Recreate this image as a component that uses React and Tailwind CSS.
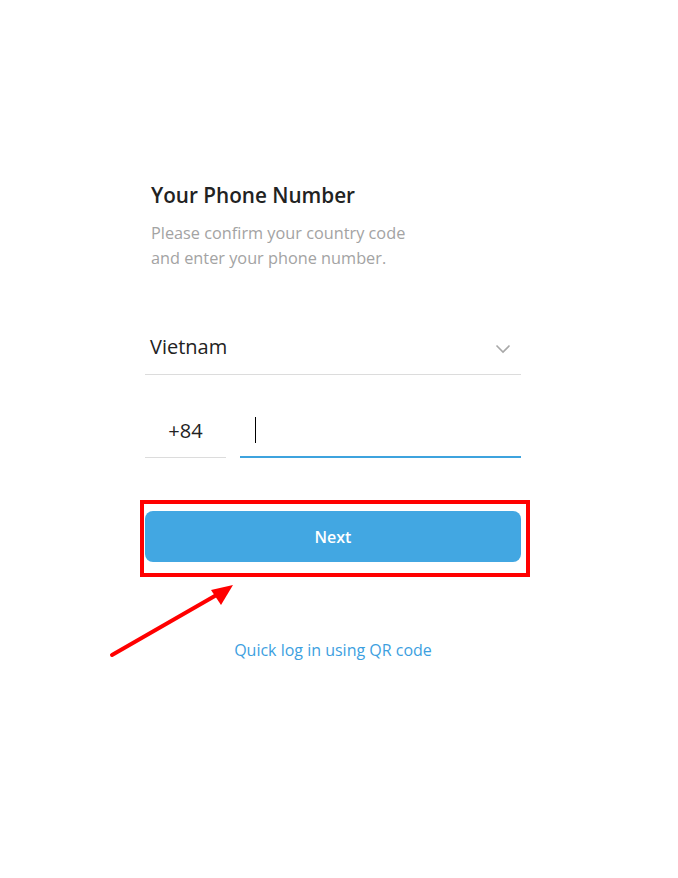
import { useState } from 'react'

export default function App() {
  const [phone, setPhone] = useState('')

  return (
    <div className="relative w-[678px] h-[878px] bg-white font-['Open_Sans',sans-serif]">
      <div className="ml-[145px] w-[376px] pt-[181px]">
        {/* Heading */}
        <h1 className="pl-[6px] text-[20.7px] leading-[28px] font-semibold text-[#222222]">Your Phone Number</h1>
        <p className="mt-[12px] pl-[6px] text-[16.3px] leading-[25px] text-[#a3a3a3]">
          Please confirm your country code
          <br />
          and enter your phone number.
        </p>

        {/* Country select */}
        <div className="mt-[49px] h-[55px] flex items-center border-b border-[#dcdcdc] pl-[5px] pr-[10px]">
          <span className="text-[20px] text-[#222222]">Vietnam</span>
          <svg className="ml-auto mt-[4px]" width="16" height="10" viewBox="0 0 16 10" fill="none">
            <path d="M1.5 1.5L8 8L14.5 1.5" stroke="#a8a8a8" strokeWidth="1.6" />
          </svg>
        </div>

        {/* Phone row */}
        <div className="mt-[29px] flex h-[54px]">
          <div className="w-[81px] flex items-center justify-center border-b border-[#dcdcdc] text-[20px] text-[#222222]">+84</div>
          <div className="ml-[14px] flex-1 flex items-center border-b-2 border-[#3ea3de] pl-[15px]">
            <span className="w-px h-[26px] bg-black" />
            <input
              value={phone}
              onChange={(e) => setPhone(e.target.value)}
              className="flex-1 outline-none text-[20px] bg-transparent"
            />
          </div>
        </div>

        {/* Next button with annotation box */}
        <div className="relative mt-[53px]">
          <button className="w-full h-[51px] rounded-[8px] bg-[#42a7e2] text-white text-[16px] font-semibold">Next</button>
          <div className="absolute -left-[5px] -top-[11px] -right-[9px] -bottom-[15px] border-4 border-[#ff0000]" />
        </div>

        <p className="mt-[76px] text-center text-[16px] leading-[24px] text-[#3d9fdf]">Quick log in using QR code</p>
      </div>

      {/* Annotation arrow */}
      <svg className="absolute left-0 top-0" width="678" height="878" viewBox="0 0 678 878" fill="none">
        <line x1="112" y1="655" x2="220" y2="593" stroke="#ff0000" strokeWidth="4" strokeLinecap="round" />
        <polygon points="233,585 211,590 221,605" fill="#ff0000" />
      </svg>
    </div>
  )
}
